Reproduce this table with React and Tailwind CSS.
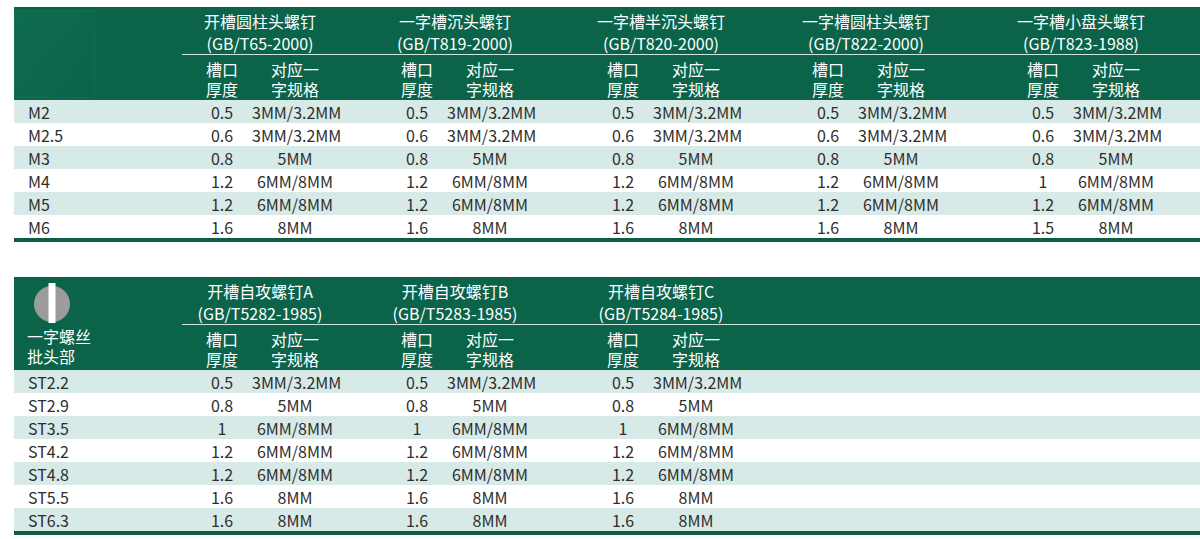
import React from "react";

const GROUP_W = ["w-[195px]", "w-[206px]", "w-[205px]", "w-[215px]", "w-[187px]"];

const topGroups = [
  { name: "开槽圆柱头螺钉", std: "(GB/T65-2000)" },
  { name: "一字槽沉头螺钉", std: "(GB/T819-2000)" },
  { name: "一字槽半沉头螺钉", std: "(GB/T820-2000)" },
  { name: "一字槽圆柱头螺钉", std: "(GB/T822-2000)" },
  { name: "一字槽小盘头螺钉", std: "(GB/T823-1988)" },
];

const topRows = [
  ["M2", ["0.5", "3MM/3.2MM"], ["0.5", "3MM/3.2MM"], ["0.5", "3MM/3.2MM"], ["0.5", "3MM/3.2MM"], ["0.5", "3MM/3.2MM"]],
  ["M2.5", ["0.6", "3MM/3.2MM"], ["0.6", "3MM/3.2MM"], ["0.6", "3MM/3.2MM"], ["0.6", "3MM/3.2MM"], ["0.6", "3MM/3.2MM"]],
  ["M3", ["0.8", "5MM"], ["0.8", "5MM"], ["0.8", "5MM"], ["0.8", "5MM"], ["0.8", "5MM"]],
  ["M4", ["1.2", "6MM/8MM"], ["1.2", "6MM/8MM"], ["1.2", "6MM/8MM"], ["1.2", "6MM/8MM"], ["1", "6MM/8MM"]],
  ["M5", ["1.2", "6MM/8MM"], ["1.2", "6MM/8MM"], ["1.2", "6MM/8MM"], ["1.2", "6MM/8MM"], ["1.2", "6MM/8MM"]],
  ["M6", ["1.6", "8MM"], ["1.6", "8MM"], ["1.6", "8MM"], ["1.6", "8MM"], ["1.5", "8MM"]],
];

const bottomGroups = [
  { name: "开槽自攻螺钉A", std: "(GB/T5282-1985)" },
  { name: "开槽自攻螺钉B", std: "(GB/T5283-1985)" },
  { name: "开槽自攻螺钉C", std: "(GB/T5284-1985)" },
];

const bottomRows = [
  ["ST2.2", ["0.5", "3MM/3.2MM"], ["0.5", "3MM/3.2MM"], ["0.5", "3MM/3.2MM"]],
  ["ST2.9", ["0.8", "5MM"], ["0.8", "5MM"], ["0.8", "5MM"]],
  ["ST3.5", ["1", "6MM/8MM"], ["1", "6MM/8MM"], ["1", "6MM/8MM"]],
  ["ST4.2", ["1.2", "6MM/8MM"], ["1.2", "6MM/8MM"], ["1.2", "6MM/8MM"]],
  ["ST4.8", ["1.2", "6MM/8MM"], ["1.2", "6MM/8MM"], ["1.2", "6MM/8MM"]],
  ["ST5.5", ["1.6", "8MM"], ["1.6", "8MM"], ["1.6", "8MM"]],
  ["ST6.3", ["1.6", "8MM"], ["1.6", "8MM"], ["1.6", "8MM"]],
];

function SlotIcon() {
  return (
    <svg width="38" height="40" viewBox="0 0 38 40">
      <circle cx="19" cy="21" r="18" fill="#9c9c9c" />
      <rect x="15.5" y="0" width="7" height="40" fill="#ffffff" />
    </svg>
  );
}

function Table({ groups, rows, label }) {
  return (
    <div className="w-full">
      {/* header */}
      <div className="flex h-[93px] bg-[#0b634a] text-white">
        <div className="w-[168px] shrink-0">{label}</div>
        <div className="flex-1 flex flex-col">
          <div className="h-[48px] border-b border-[#cfe4dc] pl-[10px] flex">
            {groups.map((g, i) => (
              <div key={i} className={`${GROUP_W[i]} shrink-0 pt-[3px]`}>
                <div className="w-[136px] text-center text-[16px] leading-[22px] whitespace-nowrap">
                  <div>{g.name}</div>
                  <div>{g.std}</div>
                </div>
              </div>
            ))}
          </div>
          <div className="flex-1 pl-[10px] flex pt-[4px]">
            {groups.map((g, i) => (
              <div key={i} className={`${GROUP_W[i]} shrink-0 flex text-[16px] leading-[20px]`}>
                <div className="w-[60px] text-center">
                  槽口
                  <br />
                  厚度
                </div>
                <div className="w-[86px] text-center">
                  对应一
                  <br />
                  字规格
                </div>
              </div>
            ))}
          </div>
        </div>
      </div>
      {/* rows */}
      {rows.map((r, ri) => (
        <div
          key={ri}
          className={`flex h-[23px] items-center text-[16px] text-[#2e2e2e] ${ri % 2 === 0 ? "bg-[#d7eae7]" : "bg-white"}`}
        >
          <div className="w-[168px] shrink-0 pl-[14px]">{r[0]}</div>
          <div className="flex-1 flex pl-[10px]">
            {r.slice(1).map((c, ci) => (
              <div key={ci} className={`${GROUP_W[ci]} shrink-0 flex whitespace-nowrap`}>
                <div className="w-[60px] text-center">{c[0]}</div>
                <div className="w-[86px] text-center">{c[1]}</div>
              </div>
            ))}
          </div>
        </div>
      ))}
      <div className="h-[4px] bg-[#0e5c44]" />
    </div>
  );
}

export default function App() {
  return (
    <div
      className="w-[1200px] h-[539px] bg-white overflow-hidden pl-[14px] pt-[7px]"
      style={{ fontFamily: '"Noto Sans CJK SC", "Noto Sans", sans-serif' }}
    >
      <Table
        groups={topGroups}
        rows={topRows}
        label={
          <div className="mt-[3px] w-[81px] h-[88px] bg-gradient-to-br from-[#0f6c50] to-[#0b634a] border border-[#127052]" />
        }
      />
      <div className="h-[35px]" />
      <Table
        groups={bottomGroups}
        rows={bottomRows}
        label={
          <div className="h-full flex flex-col pl-[13px]">
            <div className="mt-[6px] pl-[6px]">
              <SlotIcon />
            </div>
            <div className="mt-[3px] text-[16px] leading-[20px]">
              一字螺丝
              <br />
              批头部
            </div>
          </div>
        }
      />
    </div>
  );
}
